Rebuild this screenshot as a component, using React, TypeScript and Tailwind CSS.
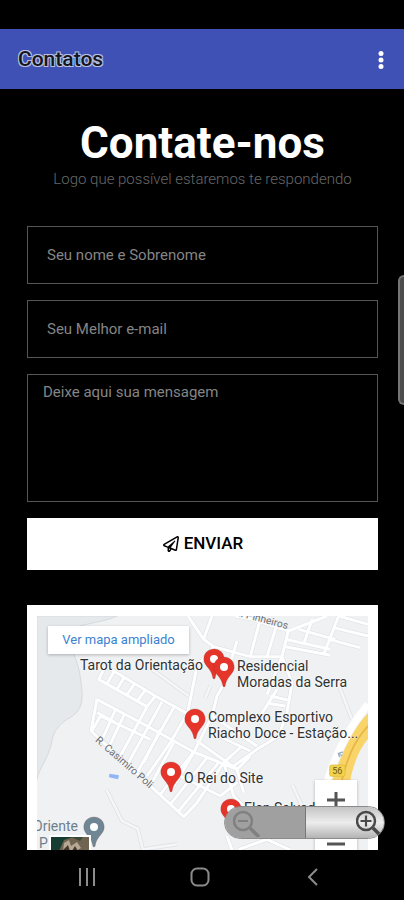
import type { ReactNode } from "react";
import { FaRegPaperPlane } from "react-icons/fa";

type PinProps = {
  className: string;
  color?: string;
};

type PlaceLabelProps = {
  className: string;
  children: ReactNode;
};

const MINOR_ROADS = [
  "M453 0 500 70 530 92 640 122 735 122",
  "M500 70 525 0",
  "M600 75 560 205 540 240 525 300 470 410 405 520",
  "M640 122 672 0",
  "M690 122 718 30",
  "M530 92 515 110 480 150 452 290 400 380 330 480",
  "M595 0 640 8 755 45 870 0",
  "M755 40 735 122 765 200 750 290 725 360 660 400 590 450",
  "M745 70 880 100",
  "M745 92 880 118",
  "M860 115 905 0",
  "M905 0 993 25",
  "M890 35 993 60",
  "M875 70 970 95",
  "M800 85 826 8",
  "M785 40 895 70",
  "M205 150 185 190 330 272 355 240 205 150",
  "M232 165 210 203",
  "M262 183 240 220",
  "M294 202 268 238",
  "M325 222 300 256",
  "M355 240 450 292",
  "M180 250 162 345 440 602 480 560 560 440 610 395",
  "M180 250 330 330 470 408 600 460",
  "M180 290 235 320",
  "M235 282 195 372",
  "M262 295 215 395",
  "M330 272 250 420",
  "M375 258 270 448",
  "M410 275 300 470",
  "M370 340 320 440",
  "M410 380 345 500",
  "M165 345 190 300 340 370",
  "M470 408 370 535",
  "M510 425 400 565",
  "M545 440 425 585",
  "M410 470 550 540",
  "M480 375 600 460 640 420",
  "M525 300 660 390",
  "M545 360 640 405",
  "M560 440 590 540 650 600",
  "M600 460 620 530",
  "M550 540 600 500",
  "M690 235 735 122",
  "M690 262 745 270",
  "M700 240 752 252",
  "M670 300 720 220",
  "M605 700 690 670 760 702",
  "M570 660 585 702",
];

const TRAILS = [
  "M908 215 945 310",
  "M765 505 800 580",
  "M208 520 255 615 302 638 318 702",
  "M318 700 420 685",
  "M520 210 505 245",
  "M345 160 455 240",
];

const FIELD_CLASS =
  "block w-full rounded-none border border-[#565656] bg-black text-[15px] text-[#999] placeholder:text-[#858585] outline-none";

const Pin = ({ className, color = "#e5352b" }: PinProps) => (
  <svg viewBox="0 0 22 32" className={`absolute h-8 w-[22px] ${className}`} aria-hidden="true">
    <path
      d="M11 1C5.3 1 .8 5.3 .8 11c0 4 2.400 6.400 4.900 9.600C8 23.600 9.200 26 9.900 30c.2 1.200 2 1.200 2.200 0 .7-4 1.900-6.400 4.200-9.400C18.800 17.400 21.200 15 21.200 11 21.200 5.300 16.700 1 11 1Z"
      fill={color}
      stroke="#7d2b27"
      strokeOpacity="0.3"
      strokeWidth="0.7"
    />
    <circle cx="11" cy="11" r="4" fill="#fff" />
  </svg>
);

const PlaceLabel = ({ className, children }: PlaceLabelProps) => (
  <span
    className={`absolute whitespace-nowrap text-sm leading-4 text-[#2f3133] [text-shadow:0_0_2px_#fff,0_0_2px_#fff] ${className}`}
  >
    {children}
  </span>
);

const MapDrawing = () => (
  <svg viewBox="0 0 993 702" preserveAspectRatio="xMidYMin slice" className="block h-full w-full" aria-hidden="true">
    <rect width="993" height="702" fill="#eff1f3" />
    <path
      d="M0 0H240C190 25 100 20 95 60C105 110 125 140 130 185C140 250 140 285 90 310C40 345 50 370 38 400C25 440 5 460 0 490Z"
      fill="#e6e9ec"
      stroke="#d6d9dd"
      strokeWidth="3"
    />
    <g fill="none" stroke="#dcdfe3" strokeWidth="12" strokeLinejoin="round">
      {MINOR_ROADS.map((d) => (
        <path key={d} d={d} />
      ))}
      {TRAILS.map((d) => (
        <path key={d} d={d} />
      ))}
    </g>
    <g fill="none" stroke="#fff" strokeWidth="9" strokeLinejoin="round">
      {MINOR_ROADS.map((d) => (
        <path key={d} d={d} />
      ))}
    </g>
    <g fill="none" stroke="#f4f6f8" strokeWidth="8" strokeLinejoin="round">
      {TRAILS.map((d) => (
        <path key={d} d={d} />
      ))}
    </g>
    <path d="M993 265C940 330 900 400 872 492" fill="none" stroke="#fff" strokeWidth="22" />
    <path d="M993 292C950 335 915 410 886 492H940C950 440 970 395 993 368Z" fill="#f8d469" />
    <path d="M993 330C950 375 930 430 915 492" fill="none" stroke="#e6b645" strokeWidth="5" />
    <rect x="878" y="447" width="46" height="34" rx="5" fill="#f3d24c" stroke="#d8b83c" strokeWidth="2" />
    <text x="901" y="474" textAnchor="middle" fontSize="27" fill="#6b5a1e">
      56
    </text>
    <path d="M918 408 904 412 908 424M904 412 916 420" fill="none" stroke="#9db4c6" strokeWidth="4" />
    <path d="M217 473 246 478 243 490 216 484Z" fill="#8fb6f5" />
    <g fill="#6b6f73" stroke="#f2f4f6" strokeWidth="3" paintOrder="stroke" fontSize="31">
      <text transform="translate(173 375) rotate(41)">R. Casimiro Poli</text>
      <text transform="translate(592 -3) rotate(15)">R. Pinheiros</text>
    </g>
  </svg>
);

const MapCard = () => (
  <section
    aria-label="Mapa"
    className="mt-[35px] min-h-[245px] flex-1 overflow-hidden bg-white px-[10px] pt-[11px]"
  >
    <div className="relative h-full overflow-hidden">
      <div className="h-[234px]">
        <MapDrawing />
      </div>

      <Pin className="left-[166px] top-8" />
      <Pin className="left-[176px] top-10" />
      <Pin className="left-[147px] top-[92px]" />
      <Pin className="left-[123px] top-[145px]" />
      <Pin className="left-[183px] top-[182px]" />
      <Pin className="left-[46px] top-[200px]" color="#6f8794" />

      <PlaceLabel className="left-[43px] top-[41px]">Tarot da Orientação</PlaceLabel>
      <PlaceLabel className="left-[200px] top-[42px]">
        Residencial
        <br />
        Moradas da Serra
      </PlaceLabel>
      <PlaceLabel className="left-[171px] top-[93px]">
        Complexo Esportivo
        <br />
        Riacho Doce - Estação...
      </PlaceLabel>
      <PlaceLabel className="left-[147px] top-[154px]">O Rei do Site</PlaceLabel>
      <PlaceLabel className="left-[207px] top-[184px]">Elen Salvador</PlaceLabel>
      <span className="absolute -left-1 top-[202px] text-sm leading-4 text-[#6d7f8b]">Oriente</span>
      <span className="absolute left-[2px] top-[219px] text-sm leading-4 text-[#6d7f8b]">P</span>

      <a
        href="#mapa"
        className="absolute left-[11px] top-[10px] flex h-7 w-[141px] items-center justify-center bg-white text-[13px] text-[#3b82d0] shadow-[0_1px_3px_rgba(0,0,0,0.25)]"
      >
        Ver mapa ampliado
      </a>

      <button
        type="button"
        aria-label="Alternar para satélite"
        className="absolute left-3 top-[219px] h-10 w-[42px] overflow-hidden border-2 border-white bg-[#173c31]"
      >
        <svg viewBox="0 0 38 36" className="h-full w-full" aria-hidden="true">
          <path d="M8 14 13 3 22 0H38V14Z" fill="#6f6450" />
          <path d="M13 6 18 3 20 9 26 5 30 11 25 14H12Z" fill="#b7a893" />
          <path d="M20 0H32L29 4Z" fill="#3c4a35" />
          <path d="M11 14 17 8 19 14ZM24 9 27 14H21Z" fill="#40382c" />
        </svg>
      </button>

      <div className="absolute right-[11px] top-[164px] w-[42px] bg-white text-[#555] shadow-[0_1px_3px_rgba(0,0,0,0.25)]">
        <button type="button" aria-label="Aumentar" className="flex h-10 w-full items-center justify-center">
          <svg viewBox="0 0 18 18" className="h-[18px] w-[18px]" aria-hidden="true">
            <path d="M9 1V17M0 9H18" stroke="currentColor" strokeWidth="3" />
          </svg>
        </button>
        <button type="button" aria-label="Diminuir" className="flex h-10 w-full items-center justify-center pt-2">
          <svg viewBox="0 0 18 18" className="h-[18px] w-[18px]" aria-hidden="true">
            <path d="M0 9H18" stroke="currentColor" strokeWidth="3" />
          </svg>
        </button>
      </div>
    </div>
  </section>
);

const PageZoom = () => (
  <div className="fixed bottom-[61px] right-[19px] z-10 flex h-[33px] w-[161px] overflow-hidden rounded-full border border-[#8b8b8b]">
    <button
      type="button"
      aria-label="Reduzir página"
      className="flex flex-1 items-center border-r border-[#777] bg-[#a0a0a0] pl-2 text-[#808080]"
    >
      <svg viewBox="0 0 28 28" className="h-7 w-7" fill="none" stroke="currentColor" aria-hidden="true">
        <circle cx="10" cy="12" r="9" strokeWidth="2.500" />
        <path d="M5 12H15" strokeWidth="2.200" />
        <path d="M17 19 26 28" strokeWidth="3.500" />
      </svg>
    </button>
    <button
      type="button"
      aria-label="Ampliar página"
      className="flex w-[78px] items-center justify-end bg-linear-to-b from-[#c4c4c4] via-[#ededed] to-[#b4b4b4] text-[#4a4a4a]"
    >
      <svg viewBox="0 0 28 28" className="h-7 w-7" fill="none" stroke="currentColor" aria-hidden="true">
        <circle cx="10" cy="12" r="9" strokeWidth="2.500" />
        <path d="M4.500 12H15.500M10 6.500V17.500" strokeWidth="2.200" />
        <path d="M17 19 25 27" strokeWidth="3.500" />
      </svg>
    </button>
  </div>
);

const SystemNav = () => (
  <nav
    aria-label="Navegação do sistema"
    className="sticky bottom-0 grid h-[50px] grid-cols-3 place-items-center bg-black pl-[30px] pr-[34px] pt-1 text-[#8c8c8c]"
  >
    <button type="button" aria-label="Recentes">
      <svg viewBox="0 0 20 20" className="h-5 w-5" stroke="currentColor" strokeWidth="2" aria-hidden="true">
        <path d="M3 1V19M10 1V19M17 1V19" />
      </svg>
    </button>
    <button type="button" aria-label="Início">
      <svg viewBox="0 0 20 20" className="h-5 w-5" fill="none" stroke="currentColor" strokeWidth="2" aria-hidden="true">
        <rect x="1.500" y="1.500" width="17" height="17" rx="5.500" />
      </svg>
    </button>
    <button type="button" aria-label="Voltar">
      <svg viewBox="0 0 20 20" className="h-5 w-5" fill="none" stroke="currentColor" strokeWidth="2" aria-hidden="true">
        <path d="M14 2 6 10 14 18" />
      </svg>
    </button>
  </nav>
);

export default function App() {
  return (
    <div className="flex min-h-screen flex-col bg-black pt-[29px] font-[Roboto,sans-serif]">
      <header className="flex h-[60px] shrink-0 items-center justify-between bg-[#4051b5] pl-[18px] pr-[17px] pt-0.5">
        <span className="text-[21px] font-medium text-[#14161f] [text-shadow:-1px_-1px_0_#b9bfdf,1px_-1px_0_#b9bfdf,-1px_1px_0_#b9bfdf,1px_1px_0_#b9bfdf]">
          Contatos
        </span>
        <button type="button" aria-label="Mais opções">
          <svg viewBox="0 0 12 20" className="h-5 w-3" fill="#fff" aria-hidden="true">
            <circle cx="6" cy="3.500" r="2.500" />
            <circle cx="6" cy="10" r="2.500" />
            <circle cx="6" cy="16.500" r="2.500" />
          </svg>
        </button>
      </header>

      <main className="flex flex-1 flex-col pl-[27px] pr-[26px] pt-7">
        <div className="text-center">
          <h1 className="text-[44px] font-bold leading-[52px] text-white">Contate-nos</h1>
          <p className="text-[15px] leading-5 font-light text-[#686868]">
            Logo que possível estaremos te respondendo
          </p>
        </div>

        <form className="mt-[37px] flex flex-col gap-4" onSubmit={(event) => event.preventDefault()}>
          <input
            type="text"
            aria-label="Seu nome e Sobrenome"
            placeholder="Seu nome e Sobrenome"
            className={`h-[58px] px-[19px] ${FIELD_CLASS}`}
          />
          <input
            type="email"
            aria-label="Seu Melhor e-mail"
            placeholder="Seu Melhor e-mail"
            className={`h-[58px] px-[19px] ${FIELD_CLASS}`}
          />
          <textarea
            aria-label="Deixe aqui sua mensagem"
            placeholder="Deixe aqui sua mensagem"
            className={`h-32 resize-none px-[15px] py-1.5 ${FIELD_CLASS}`}
          />
          <button
            type="submit"
            className="flex h-[52px] items-center justify-center gap-1 bg-white text-[17px] font-medium text-black"
          >
            <FaRegPaperPlane className="h-4 w-[18px]" />
            ENVIAR
          </button>
        </form>

        <MapCard />
      </main>

      <PageZoom />
      <div className="fixed right-0 top-[275px] h-[130px] w-[6px] rounded-l-md border-2 border-r-0 border-[#767676] bg-[#4c4c4c]" />
      <SystemNav />
    </div>
  );
}
